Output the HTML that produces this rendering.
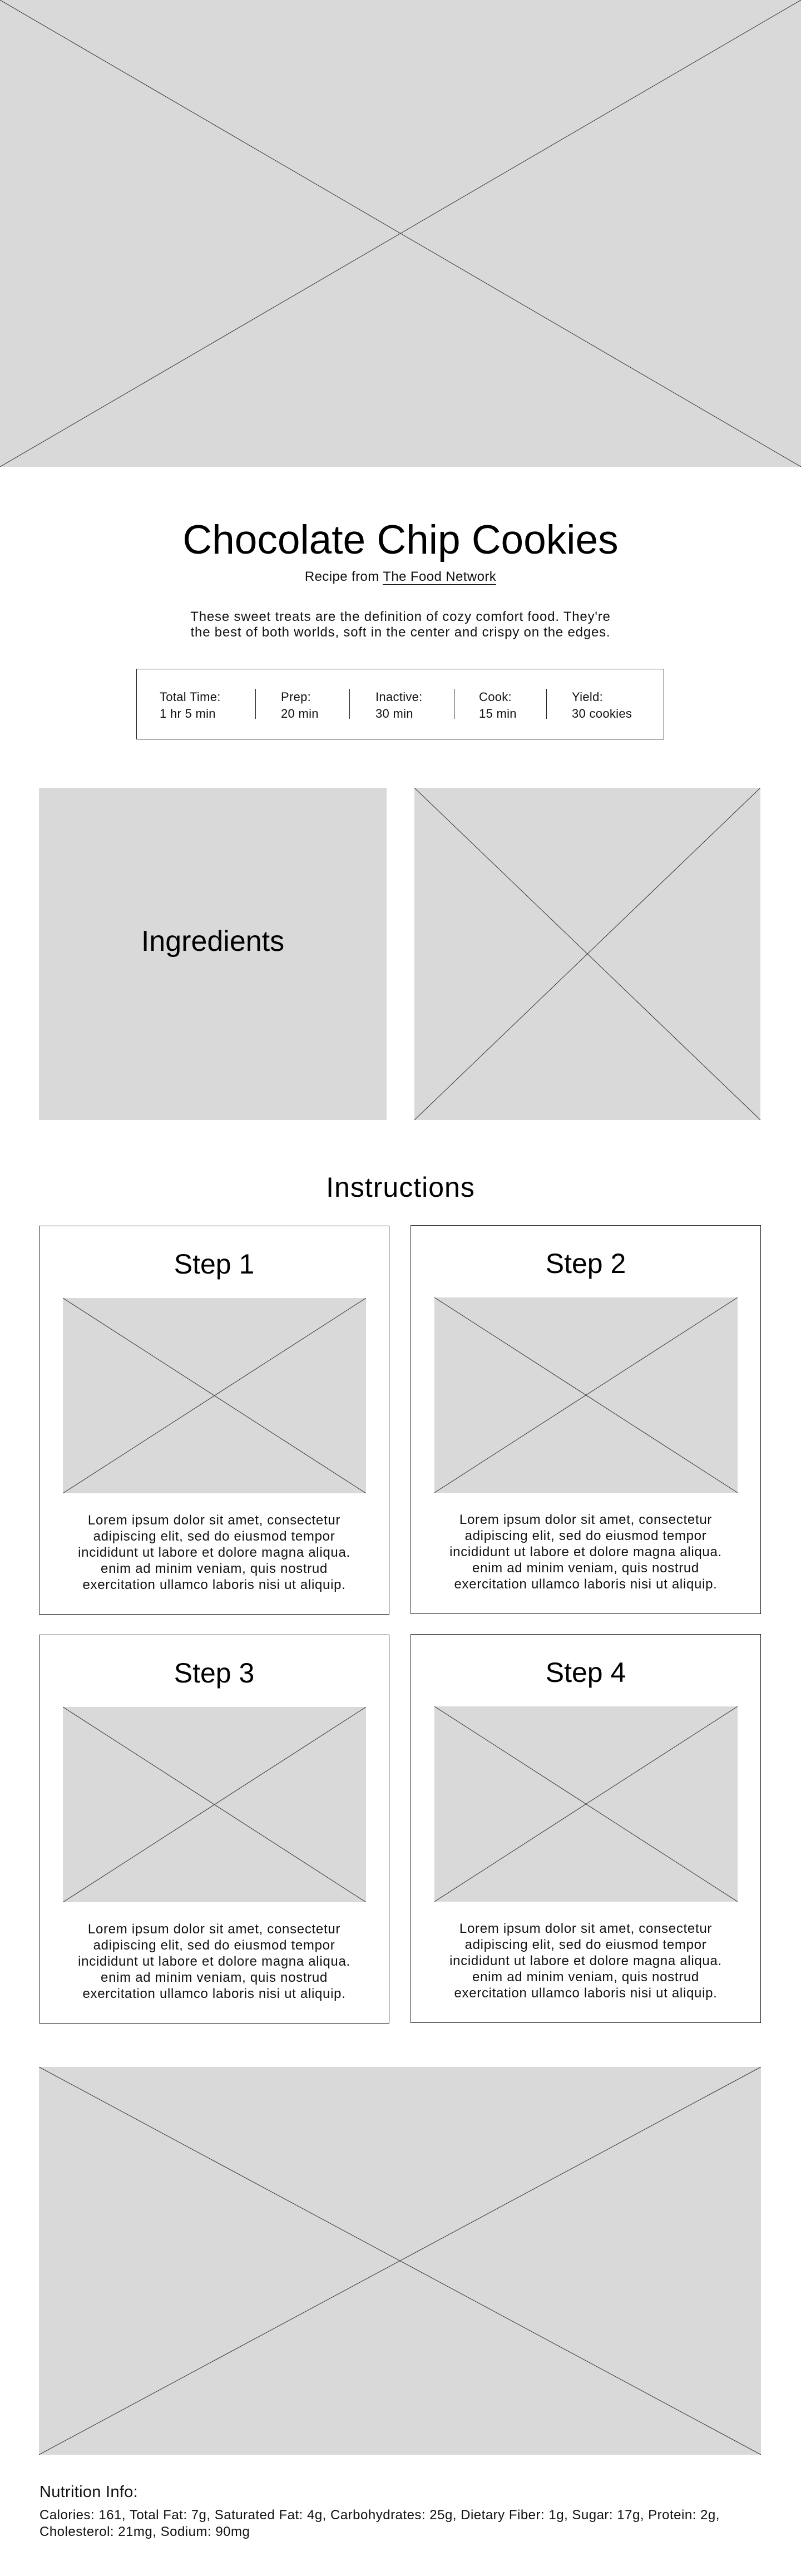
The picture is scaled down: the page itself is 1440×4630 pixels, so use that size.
<!DOCTYPE html>
<html><head><meta charset="utf-8"><style>
*{margin:0;padding:0;box-sizing:border-box}
body{width:1440px;height:4630px;position:relative;background:#fff;font-family:"Liberation Sans",sans-serif;color:#000;overflow:hidden}
.ph{position:absolute;background:#d9d9d9}
.ph svg{position:absolute;left:0;top:0;width:100%;height:100%}
.abs{position:absolute}
.c{text-align:center}
.card{position:absolute;border:1px solid #222;background:#fff}
.card h3{position:absolute;left:0;right:0;top:38px;text-align:center;font-weight:400;font-size:50px;line-height:60px}
.card .ph{left:42px;top:129px;width:545px;height:351px}
.card p{position:absolute;left:0;right:0;top:514px;text-align:center;font-size:24px;letter-spacing:0.7px;line-height:29px;color:#111}
.t{position:absolute;top:1238px;font-size:22px;letter-spacing:0.3px;line-height:30px;color:#111}
.dv{position:absolute;top:1238px;width:1px;height:54px;background:#222}
</style></head><body>
<div class="ph" style="left:0;top:0;width:1440px;height:839px"><svg viewBox="0 0 100 100" preserveAspectRatio="none"><path d="M0 0L100 100M100 0L0 100" stroke="#333" stroke-width="1" vector-effect="non-scaling-stroke" fill="none"/></svg></div>

<div class="abs c" style="left:0;width:1440px;top:929px;font-size:73px;line-height:84px">Chocolate Chip Cookies</div>
<div class="abs c" style="left:0;width:1440px;top:1022px;font-size:24px;letter-spacing:0.4px;line-height:30px;color:#111">Recipe from <span style="border-bottom:1.5px solid #111">The Food Network</span></div>
<div class="abs c" style="left:0;width:1440px;top:1095px;font-size:24px;letter-spacing:0.8px;line-height:28px;color:#111">These sweet treats are the definition of cozy comfort food. They're<br>the best of both worlds, soft in the center and crispy on the edges.</div>

<div class="abs" style="left:245px;top:1202px;width:949px;height:127px;border:1px solid #222"></div>
<div class="t" style="left:287px">Total Time:<br>1 hr 5 min</div>
<div class="dv" style="left:459px"></div>
<div class="t" style="left:505px">Prep:<br>20 min</div>
<div class="dv" style="left:628px"></div>
<div class="t" style="left:675px">Inactive:<br>30 min</div>
<div class="dv" style="left:816px"></div>
<div class="t" style="left:861px">Cook:<br>15 min</div>
<div class="dv" style="left:982px"></div>
<div class="t" style="left:1028px">Yield:<br>30 cookies</div>

<div class="ph" style="left:70px;top:1416px;width:625px;height:597px"><div class="abs c" style="left:0;right:0;top:246px;font-size:52px;line-height:60px">Ingredients</div></div>
<div class="ph" style="left:745px;top:1416px;width:622px;height:597px"><svg viewBox="0 0 100 100" preserveAspectRatio="none"><path d="M0 0L100 100M100 0L0 100" stroke="#333" stroke-width="1" vector-effect="non-scaling-stroke" fill="none"/></svg></div>

<div class="abs c" style="left:0;width:1440px;top:2104px;font-size:50px;letter-spacing:1px;line-height:60px">Instructions</div>

<div class="card" style="left:70px;top:2203px;width:630px;height:699px"><h3>Step 1</h3><div class="ph"><svg viewBox="0 0 100 100" preserveAspectRatio="none"><path d="M0 0L100 100M100 0L0 100" stroke="#333" stroke-width="1" vector-effect="non-scaling-stroke" fill="none"/></svg></div><p>Lorem ipsum dolor sit amet, consectetur<br>adipiscing elit, sed do eiusmod tempor<br>incididunt ut labore et dolore magna aliqua.<br>enim ad minim veniam, quis nostrud<br>exercitation ullamco laboris nisi ut aliquip.</p></div>
<div class="card" style="left:738px;top:2202px;width:630px;height:699px"><h3>Step 2</h3><div class="ph"><svg viewBox="0 0 100 100" preserveAspectRatio="none"><path d="M0 0L100 100M100 0L0 100" stroke="#333" stroke-width="1" vector-effect="non-scaling-stroke" fill="none"/></svg></div><p>Lorem ipsum dolor sit amet, consectetur<br>adipiscing elit, sed do eiusmod tempor<br>incididunt ut labore et dolore magna aliqua.<br>enim ad minim veniam, quis nostrud<br>exercitation ullamco laboris nisi ut aliquip.</p></div>
<div class="card" style="left:70px;top:2938px;width:630px;height:699px"><h3>Step 3</h3><div class="ph"><svg viewBox="0 0 100 100" preserveAspectRatio="none"><path d="M0 0L100 100M100 0L0 100" stroke="#333" stroke-width="1" vector-effect="non-scaling-stroke" fill="none"/></svg></div><p>Lorem ipsum dolor sit amet, consectetur<br>adipiscing elit, sed do eiusmod tempor<br>incididunt ut labore et dolore magna aliqua.<br>enim ad minim veniam, quis nostrud<br>exercitation ullamco laboris nisi ut aliquip.</p></div>
<div class="card" style="left:738px;top:2937px;width:630px;height:699px"><h3>Step 4</h3><div class="ph"><svg viewBox="0 0 100 100" preserveAspectRatio="none"><path d="M0 0L100 100M100 0L0 100" stroke="#333" stroke-width="1" vector-effect="non-scaling-stroke" fill="none"/></svg></div><p>Lorem ipsum dolor sit amet, consectetur<br>adipiscing elit, sed do eiusmod tempor<br>incididunt ut labore et dolore magna aliqua.<br>enim ad minim veniam, quis nostrud<br>exercitation ullamco laboris nisi ut aliquip.</p></div>

<div class="ph" style="left:70px;top:3715px;width:1298px;height:697px"><svg viewBox="0 0 100 100" preserveAspectRatio="none"><path d="M0 0L100 100M100 0L0 100" stroke="#333" stroke-width="1" vector-effect="non-scaling-stroke" fill="none"/></svg></div>

<div class="abs" style="left:71px;top:4462px;font-size:29px;letter-spacing:0.3px;line-height:34px;color:#111">Nutrition Info:</div>
<div class="abs" style="left:71px;top:4506px;width:1330px;font-size:24px;letter-spacing:0.5px;line-height:30px;color:#111">Calories: 161, Total Fat: 7g, Saturated Fat: 4g, Carbohydrates: 25g, Dietary Fiber: 1g, Sugar: 17g, Protein: 2g,<br>Cholesterol: 21mg, Sodium: 90mg</div>
</body></html>
